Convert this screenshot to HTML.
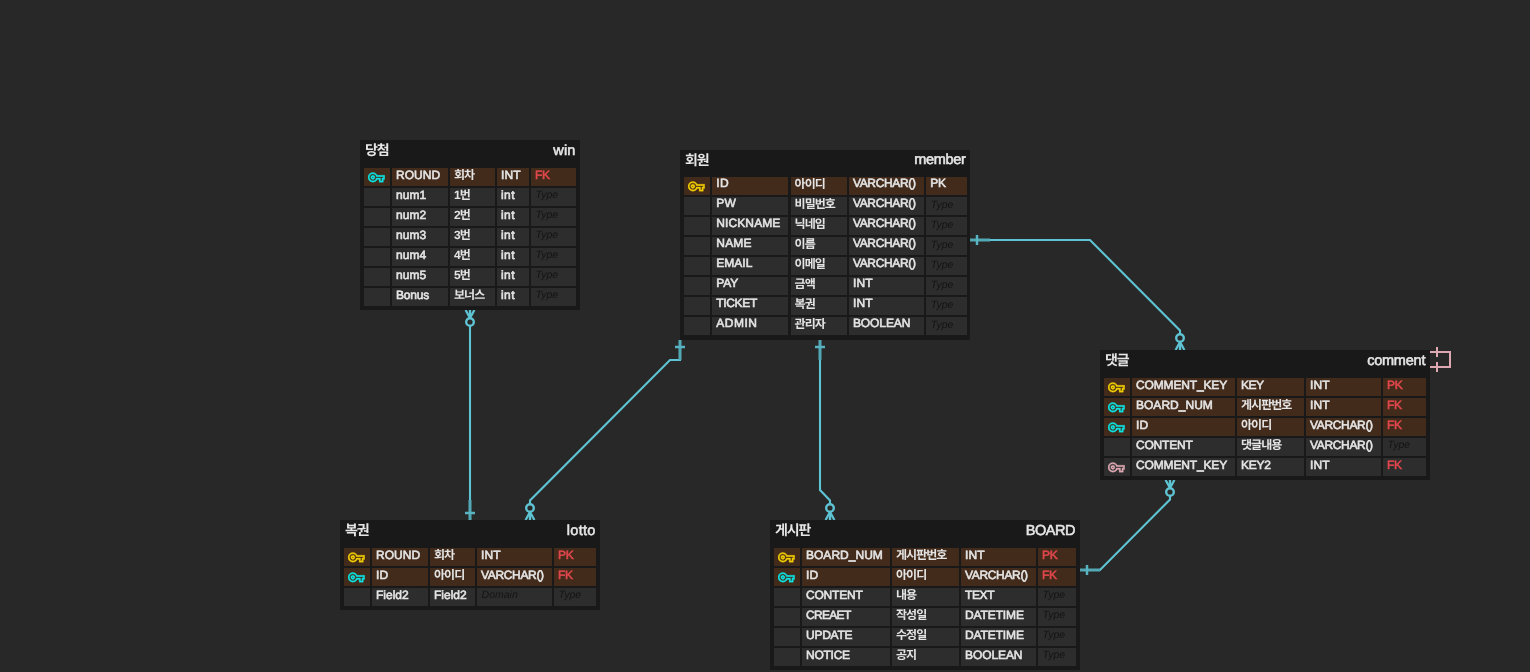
<!DOCTYPE html>
<html lang="ko">
<head>
<meta charset="utf-8">
<title>ERD</title>
<style>
html,body{margin:0;padding:0;background:#282828;}
body{width:1530px;height:672px;position:relative;overflow:hidden;font-family:"Liberation Sans","Noto Sans CJK KR",sans-serif;text-rendering:geometricPrecision;filter:blur(0.55px)}
#defs{position:absolute;width:0;height:0;overflow:hidden}
#rels{position:absolute;left:0;top:0;width:1530px;height:672px;pointer-events:none}
.rel path,.rel line,.rel circle{stroke:#5ec3d2;stroke-width:2.1;fill:none}
.rel circle{fill:#282828;stroke-width:2.4}
.rel .ft{stroke-width:2.3}
.rel .l2{stroke:#52a8b5;stroke-width:3}
.rel .tk{stroke:#58b4c3;stroke-width:2.5}
.rel.self path,.rel.self line{stroke:#dda8b1;stroke-width:2}
.table{position:absolute;background:#191919;box-sizing:border-box;overflow:hidden}
.th{display:block;position:relative;height:28px;color:#e6e6e6}
.th .ln{position:absolute;left:5px;top:0;height:22px;font-size:14px;line-height:21.5px;white-space:nowrap}
.th .pn{position:absolute;right:4.6px;top:3px;margin-top:var(--pndy,0px);font-size:14.5px;line-height:16px;font-weight:normal;-webkit-text-stroke:0.55px currentColor;white-space:nowrap}
.row{display:flex;height:18px;margin:0 4px 2px 4px;position:relative;top:var(--rowdy,0px)}
.c{flex:none;height:18px;margin-right:var(--gap,2px);box-sizing:border-box;padding:0 0 0 4px;background:#2d2d2d;color:#e4e4e4;font-size:12px;line-height:14px;font-weight:normal;-webkit-text-stroke:0.6px currentColor;white-space:nowrap;overflow:hidden;padding-top:0px}
.c:last-child{margin-right:0}
.row.k .c{background:#432b1b}
.c.kt{color:#e0474c}
.c>.t{display:inline-block}
.c>.ko{display:inline-block;position:relative;top:var(--txtdy,0px)}
.c>.t{position:relative;top:calc(var(--txtdy,0px) - 0.3px)}
.c.ph{color:#141414;font-style:italic;font-weight:normal;-webkit-text-stroke:0;font-size:10.5px;line-height:14.5px;padding-left:4.6px;padding-top:var(--phdy,0px)}
.c.ic{padding:0;position:relative}
.key{position:absolute;left:4.15px;top:0.75px;display:block;stroke-width:0.5;stroke-linejoin:round}
.key.pk{fill:#f2ce00;stroke:#f2ce00}.key.fk{fill:#0ce4e4;stroke:#0ce4e4}.key.pfk{fill:#dda8b1;stroke:#dda8b1}
.ko{font-family:"Liberation Sans","Noto Sans CJK KR",sans-serif;font-weight:700;-webkit-text-stroke:0;letter-spacing:-0.08em;white-space:nowrap}
</style>
</head>
<body>
<svg id="defs" aria-hidden="true"><defs><path id="vpnkey" d="M22 19h-6v-4h-2.68c-1.14 2.42-3.6 4-6.32 4-3.86 0-7-3.14-7-7s3.14-7 7-7c2.72 0 5.17 1.58 6.32 4H24v6h-2v4zm-4-2h2v-4h2v-2H11.94l-.23-.67C11.01 8.34 9.11 7 7 7c-2.76 0-5 2.24-5 5s2.24 5 5 5c2.11 0 4.01-1.34 4.71-3.33l.23-.67H18v4zM7 15c-1.65 0-3-1.35-3-3s1.35-3 3-3 3 1.35 3 3-1.35 3-3 3zm0-4c-.55 0-1 .45-1 1s.45 1 1 1 1-.45 1-1-.45-1-1-1z"/></defs></svg>
<svg id="rels" viewBox="0 0 1530 672" aria-hidden="true">
<g class="rel"><path d="M470 310V520"/><line class="ft" x1="470" y1="318" x2="474.4" y2="310.0"/><line class="ft" x1="470" y1="318" x2="470" y2="310"/><line class="ft" x1="470" y1="318" x2="465.6" y2="310.0"/><circle cx="470" cy="322" r="3.8"/><line class="l2" x1="470" y1="520" x2="470" y2="500"/><line class="tk" x1="475" y1="513" x2="465" y2="513"/></g>
<g class="rel"><path d="M680 340V360H670L530 500.5V520"/><line class="l2" x1="680" y1="340" x2="680" y2="360"/><line class="tk" x1="675" y1="347" x2="685" y2="347"/><line class="ft" x1="530" y1="512" x2="525.6" y2="520.0"/><line class="ft" x1="530" y1="512" x2="530" y2="520"/><line class="ft" x1="530" y1="512" x2="534.4" y2="520.0"/><circle cx="530" cy="508" r="3.8"/></g>
<g class="rel"><path d="M820 340V490L830 500.5V520"/><line class="l2" x1="820" y1="340" x2="820" y2="360"/><line class="tk" x1="815" y1="347" x2="825" y2="347"/><line class="ft" x1="830" y1="512" x2="825.6" y2="520.0"/><line class="ft" x1="830" y1="512" x2="830" y2="520"/><line class="ft" x1="830" y1="512" x2="834.4" y2="520.0"/><circle cx="830" cy="508" r="3.8"/></g>
<g class="rel"><path d="M970 240H1090L1180 330.5V350"/><line class="l2" x1="970" y1="240" x2="990" y2="240"/><line class="tk" x1="977" y1="245" x2="977" y2="235"/><line class="ft" x1="1180" y1="342" x2="1175.6" y2="350.0"/><line class="ft" x1="1180" y1="342" x2="1180" y2="350"/><line class="ft" x1="1180" y1="342" x2="1184.4" y2="350.0"/><circle cx="1180" cy="338" r="3.8"/></g>
<g class="rel"><path d="M1080 570H1100L1170 499.5V480"/><line class="l2" x1="1080" y1="570" x2="1100" y2="570"/><line class="tk" x1="1087" y1="575" x2="1087" y2="565"/><line class="ft" x1="1170" y1="488" x2="1174.4" y2="480.0"/><line class="ft" x1="1170" y1="488" x2="1170" y2="480"/><line class="ft" x1="1170" y1="488" x2="1165.6" y2="480.0"/><circle cx="1170" cy="492" r="3.8"/></g>
<g class="rel self"><path d="M1430 352H1450V367H1430"/><line x1="1437" y1="347" x2="1437" y2="357"/><line x1="1437" y1="362" x2="1437" y2="372"/></g>
</svg>
<main id="canvas">
<section class="table" id="t-win" style="left:360px;top:140px;width:220px;height:170px">
<header class="th"><span class="ln"><span class="ko">당첨</span></span><span class="pn" style="letter-spacing:0.232px;margin-right:-0.232px">win</span></header>
<div class="row k">
<div class="c ic" style="width:26px"><svg class="key fk" width="16.7" height="16.7" viewBox="0 0 24 24" aria-hidden="true"><use href="#vpnkey"/></svg></div>
<div class="c" style="width:56px"><span class="t" style="letter-spacing:0.026px">ROUND</span></div>
<div class="c" style="width:45px"><span class="ko">회차</span></div>
<div class="c" style="width:32px"><span class="t" style="letter-spacing:0.157px">INT</span></div>
<div class="c kt" style="width:45px"><span class="t" style="letter-spacing:-0.231px">FK</span></div>
</div>
<div class="row">
<div class="c ic" style="width:26px"></div>
<div class="c" style="width:56px"><span class="t" style="letter-spacing:0.053px">num1</span></div>
<div class="c" style="width:45px"><span class="ko">1번</span></div>
<div class="c" style="width:32px"><span class="t" style="letter-spacing:0.458px">int</span></div>
<div class="c ph" style="width:45px">Type</div>
</div>
<div class="row">
<div class="c ic" style="width:26px"></div>
<div class="c" style="width:56px"><span class="t" style="letter-spacing:0.053px">num2</span></div>
<div class="c" style="width:45px"><span class="ko">2번</span></div>
<div class="c" style="width:32px"><span class="t" style="letter-spacing:0.458px">int</span></div>
<div class="c ph" style="width:45px">Type</div>
</div>
<div class="row">
<div class="c ic" style="width:26px"></div>
<div class="c" style="width:56px"><span class="t" style="letter-spacing:0.053px">num3</span></div>
<div class="c" style="width:45px"><span class="ko">3번</span></div>
<div class="c" style="width:32px"><span class="t" style="letter-spacing:0.458px">int</span></div>
<div class="c ph" style="width:45px">Type</div>
</div>
<div class="row">
<div class="c ic" style="width:26px"></div>
<div class="c" style="width:56px"><span class="t" style="letter-spacing:0.053px">num4</span></div>
<div class="c" style="width:45px"><span class="ko">4번</span></div>
<div class="c" style="width:32px"><span class="t" style="letter-spacing:0.458px">int</span></div>
<div class="c ph" style="width:45px">Type</div>
</div>
<div class="row">
<div class="c ic" style="width:26px"></div>
<div class="c" style="width:56px"><span class="t" style="letter-spacing:0.053px">num5</span></div>
<div class="c" style="width:45px"><span class="ko">5번</span></div>
<div class="c" style="width:32px"><span class="t" style="letter-spacing:0.458px">int</span></div>
<div class="c ph" style="width:45px">Type</div>
</div>
<div class="row">
<div class="c ic" style="width:26px"></div>
<div class="c" style="width:56px"><span class="t" style="letter-spacing:-0.167px">Bonus</span></div>
<div class="c" style="width:45px"><span class="ko">보너스</span></div>
<div class="c" style="width:32px"><span class="t" style="letter-spacing:0.458px">int</span></div>
<div class="c ph" style="width:45px">Type</div>
</div>
</section>
<section class="table" id="t-member" style="left:680px;top:150px;width:290.3px;height:190px;--rowdy:-0.7px;--txtdy:-0.6px;--phdy:1.1px;--pndy:-0.75px;--gap:2.3px">
<header class="th"><span class="ln"><span class="ko">회원</span></span><span class="pn" style="letter-spacing:-0.354px;margin-right:0.354px">member</span></header>
<div class="row k">
<div class="c ic" style="width:26px"><svg class="key pk" width="16.7" height="16.7" viewBox="0 0 24 24" aria-hidden="true"><use href="#vpnkey"/></svg></div>
<div class="c" style="width:76px"><span class="t" style="letter-spacing:0.28px">ID</span></div>
<div class="c" style="width:56px"><span class="ko">아이디</span></div>
<div class="c" style="width:75px"><span class="t" style="letter-spacing:-0.334px">VARCHAR()</span></div>
<div class="c" style="width:41px"><span class="t" style="letter-spacing:-0.258px">PK</span></div>
</div>
<div class="row">
<div class="c ic" style="width:26px"></div>
<div class="c" style="width:76px"><span class="t" style="letter-spacing:0.251px">PW</span></div>
<div class="c" style="width:56px"><span class="ko">비밀번호</span></div>
<div class="c" style="width:75px"><span class="t" style="letter-spacing:-0.334px">VARCHAR()</span></div>
<div class="c ph" style="width:41px">Type</div>
</div>
<div class="row">
<div class="c ic" style="width:26px"></div>
<div class="c" style="width:76px"><span class="t" style="letter-spacing:0.101px">NICKNAME</span></div>
<div class="c" style="width:56px"><span class="ko">닉네임</span></div>
<div class="c" style="width:75px"><span class="t" style="letter-spacing:-0.334px">VARCHAR()</span></div>
<div class="c ph" style="width:41px">Type</div>
</div>
<div class="row">
<div class="c ic" style="width:26px"></div>
<div class="c" style="width:76px"><span class="t" style="letter-spacing:0.199px">NAME</span></div>
<div class="c" style="width:56px"><span class="ko">이름</span></div>
<div class="c" style="width:75px"><span class="t" style="letter-spacing:-0.334px">VARCHAR()</span></div>
<div class="c ph" style="width:41px">Type</div>
</div>
<div class="row">
<div class="c ic" style="width:26px"></div>
<div class="c" style="width:76px"><span class="t" style="letter-spacing:-0.001px">EMAIL</span></div>
<div class="c" style="width:56px"><span class="ko">이메일</span></div>
<div class="c" style="width:75px"><span class="t" style="letter-spacing:-0.334px">VARCHAR()</span></div>
<div class="c ph" style="width:41px">Type</div>
</div>
<div class="row">
<div class="c ic" style="width:26px"></div>
<div class="c" style="width:76px"><span class="t" style="letter-spacing:-0.136px">PAY</span></div>
<div class="c" style="width:56px"><span class="ko">금액</span></div>
<div class="c" style="width:75px"><span class="t" style="letter-spacing:0.157px">INT</span></div>
<div class="c ph" style="width:41px">Type</div>
</div>
<div class="row">
<div class="c ic" style="width:26px"></div>
<div class="c" style="width:76px"><span class="t" style="letter-spacing:-0.342px">TICKET</span></div>
<div class="c" style="width:56px"><span class="ko">복권</span></div>
<div class="c" style="width:75px"><span class="t" style="letter-spacing:0.157px">INT</span></div>
<div class="c ph" style="width:41px">Type</div>
</div>
<div class="row">
<div class="c ic" style="width:26px"></div>
<div class="c" style="width:76px"><span class="t" style="letter-spacing:0.504px">ADMIN</span></div>
<div class="c" style="width:56px"><span class="ko">관리자</span></div>
<div class="c" style="width:75px"><span class="t" style="letter-spacing:-0.085px">BOOLEAN</span></div>
<div class="c ph" style="width:41px">Type</div>
</div>
</section>
<section class="table" id="t-comment" style="left:1100px;top:350px;width:330px;height:130px">
<header class="th"><span class="ln"><span class="ko">댓글</span></span><span class="pn" style="letter-spacing:-0.231px;margin-right:0.231px">comment</span></header>
<div class="row k">
<div class="c ic" style="width:26px"><svg class="key pk" width="16.7" height="16.7" viewBox="0 0 24 24" aria-hidden="true"><use href="#vpnkey"/></svg></div>
<div class="c" style="width:103px"><span class="t" style="letter-spacing:-0.148px">COMMENT_KEY</span></div>
<div class="c" style="width:67px"><span class="t" style="letter-spacing:-0.446px">KEY</span></div>
<div class="c" style="width:75px"><span class="t" style="letter-spacing:0.157px">INT</span></div>
<div class="c kt" style="width:43px"><span class="t" style="letter-spacing:-0.258px">PK</span></div>
</div>
<div class="row k">
<div class="c ic" style="width:26px"><svg class="key fk" width="16.7" height="16.7" viewBox="0 0 24 24" aria-hidden="true"><use href="#vpnkey"/></svg></div>
<div class="c" style="width:103px"><span class="t" style="letter-spacing:0.016px">BOARD_NUM</span></div>
<div class="c" style="width:67px"><span class="ko">게시판번호</span></div>
<div class="c" style="width:75px"><span class="t" style="letter-spacing:0.157px">INT</span></div>
<div class="c kt" style="width:43px"><span class="t" style="letter-spacing:-0.231px">FK</span></div>
</div>
<div class="row k">
<div class="c ic" style="width:26px"><svg class="key fk" width="16.7" height="16.7" viewBox="0 0 24 24" aria-hidden="true"><use href="#vpnkey"/></svg></div>
<div class="c" style="width:103px"><span class="t" style="letter-spacing:0.28px">ID</span></div>
<div class="c" style="width:67px"><span class="ko">아이디</span></div>
<div class="c" style="width:75px"><span class="t" style="letter-spacing:-0.334px">VARCHAR()</span></div>
<div class="c kt" style="width:43px"><span class="t" style="letter-spacing:-0.231px">FK</span></div>
</div>
<div class="row">
<div class="c ic" style="width:26px"></div>
<div class="c" style="width:103px"><span class="t" style="letter-spacing:-0.189px">CONTENT</span></div>
<div class="c" style="width:67px"><span class="ko">댓글내용</span></div>
<div class="c" style="width:75px"><span class="t" style="letter-spacing:-0.334px">VARCHAR()</span></div>
<div class="c ph" style="width:43px">Type</div>
</div>
<div class="row">
<div class="c ic" style="width:26px"><svg class="key pfk" width="16.7" height="16.7" viewBox="0 0 24 24" aria-hidden="true"><use href="#vpnkey"/></svg></div>
<div class="c" style="width:103px"><span class="t" style="letter-spacing:-0.148px">COMMENT_KEY</span></div>
<div class="c" style="width:67px"><span class="t" style="letter-spacing:-0.278px">KEY2</span></div>
<div class="c" style="width:75px"><span class="t" style="letter-spacing:0.157px">INT</span></div>
<div class="c kt" style="width:43px"><span class="t" style="letter-spacing:-0.231px">FK</span></div>
</div>
</section>
<section class="table" id="t-lotto" style="left:340px;top:520px;width:260px;height:90px">
<header class="th"><span class="ln"><span class="ko">복권</span></span><span class="pn" style="letter-spacing:0.302px;margin-right:-0.302px">lotto</span></header>
<div class="row k">
<div class="c ic" style="width:26px"><svg class="key pk" width="16.7" height="16.7" viewBox="0 0 24 24" aria-hidden="true"><use href="#vpnkey"/></svg></div>
<div class="c" style="width:56px"><span class="t" style="letter-spacing:0.026px">ROUND</span></div>
<div class="c" style="width:45px"><span class="ko">회차</span></div>
<div class="c" style="width:75px"><span class="t" style="letter-spacing:0.157px">INT</span></div>
<div class="c kt" style="width:42px"><span class="t" style="letter-spacing:-0.258px">PK</span></div>
</div>
<div class="row k">
<div class="c ic" style="width:26px"><svg class="key fk" width="16.7" height="16.7" viewBox="0 0 24 24" aria-hidden="true"><use href="#vpnkey"/></svg></div>
<div class="c" style="width:56px"><span class="t" style="letter-spacing:0.28px">ID</span></div>
<div class="c" style="width:45px"><span class="ko">아이디</span></div>
<div class="c" style="width:75px"><span class="t" style="letter-spacing:-0.334px">VARCHAR()</span></div>
<div class="c kt" style="width:42px"><span class="t" style="letter-spacing:-0.231px">FK</span></div>
</div>
<div class="row">
<div class="c ic" style="width:26px"></div>
<div class="c" style="width:56px"><span class="t" style="letter-spacing:-0.003px">Field2</span></div>
<div class="c" style="width:45px"><span class="t" style="letter-spacing:-0.003px">Field2</span></div>
<div class="c ph" style="width:75px">Domain</div>
<div class="c ph" style="width:42px">Type</div>
</div>
</section>
<section class="table" id="t-board" style="left:770px;top:520px;width:310px;height:150px">
<header class="th"><span class="ln"><span class="ko">게시판</span></span><span class="pn" style="letter-spacing:-0.494px;margin-right:0.494px">BOARD</span></header>
<div class="row k">
<div class="c ic" style="width:26px"><svg class="key pk" width="16.7" height="16.7" viewBox="0 0 24 24" aria-hidden="true"><use href="#vpnkey"/></svg></div>
<div class="c" style="width:88px"><span class="t" style="letter-spacing:0.016px">BOARD_NUM</span></div>
<div class="c" style="width:67px"><span class="ko">게시판번호</span></div>
<div class="c" style="width:75px"><span class="t" style="letter-spacing:0.157px">INT</span></div>
<div class="c kt" style="width:38px"><span class="t" style="letter-spacing:-0.258px">PK</span></div>
</div>
<div class="row k">
<div class="c ic" style="width:26px"><svg class="key fk" width="16.7" height="16.7" viewBox="0 0 24 24" aria-hidden="true"><use href="#vpnkey"/></svg></div>
<div class="c" style="width:88px"><span class="t" style="letter-spacing:0.28px">ID</span></div>
<div class="c" style="width:67px"><span class="ko">아이디</span></div>
<div class="c" style="width:75px"><span class="t" style="letter-spacing:-0.334px">VARCHAR()</span></div>
<div class="c kt" style="width:38px"><span class="t" style="letter-spacing:-0.231px">FK</span></div>
</div>
<div class="row">
<div class="c ic" style="width:26px"></div>
<div class="c" style="width:88px"><span class="t" style="letter-spacing:-0.189px">CONTENT</span></div>
<div class="c" style="width:67px"><span class="ko">내용</span></div>
<div class="c" style="width:75px"><span class="t" style="letter-spacing:-0.402px">TEXT</span></div>
<div class="c ph" style="width:38px">Type</div>
</div>
<div class="row">
<div class="c ic" style="width:26px"></div>
<div class="c" style="width:88px"><span class="t" style="letter-spacing:-0.69px">CREAET</span></div>
<div class="c" style="width:67px"><span class="ko">작성일</span></div>
<div class="c" style="width:75px"><span class="t" style="letter-spacing:-0.115px">DATETIME</span></div>
<div class="c ph" style="width:38px">Type</div>
</div>
<div class="row">
<div class="c ic" style="width:26px"></div>
<div class="c" style="width:88px"><span class="t" style="letter-spacing:-0.245px">UPDATE</span></div>
<div class="c" style="width:67px"><span class="ko">수정일</span></div>
<div class="c" style="width:75px"><span class="t" style="letter-spacing:-0.115px">DATETIME</span></div>
<div class="c ph" style="width:38px">Type</div>
</div>
<div class="row">
<div class="c ic" style="width:26px"></div>
<div class="c" style="width:88px"><span class="t" style="letter-spacing:-0.256px">NOTICE</span></div>
<div class="c" style="width:67px"><span class="ko">공지</span></div>
<div class="c" style="width:75px"><span class="t" style="letter-spacing:-0.085px">BOOLEAN</span></div>
<div class="c ph" style="width:38px">Type</div>
</div>
</section>
</main>
</body>
</html>
